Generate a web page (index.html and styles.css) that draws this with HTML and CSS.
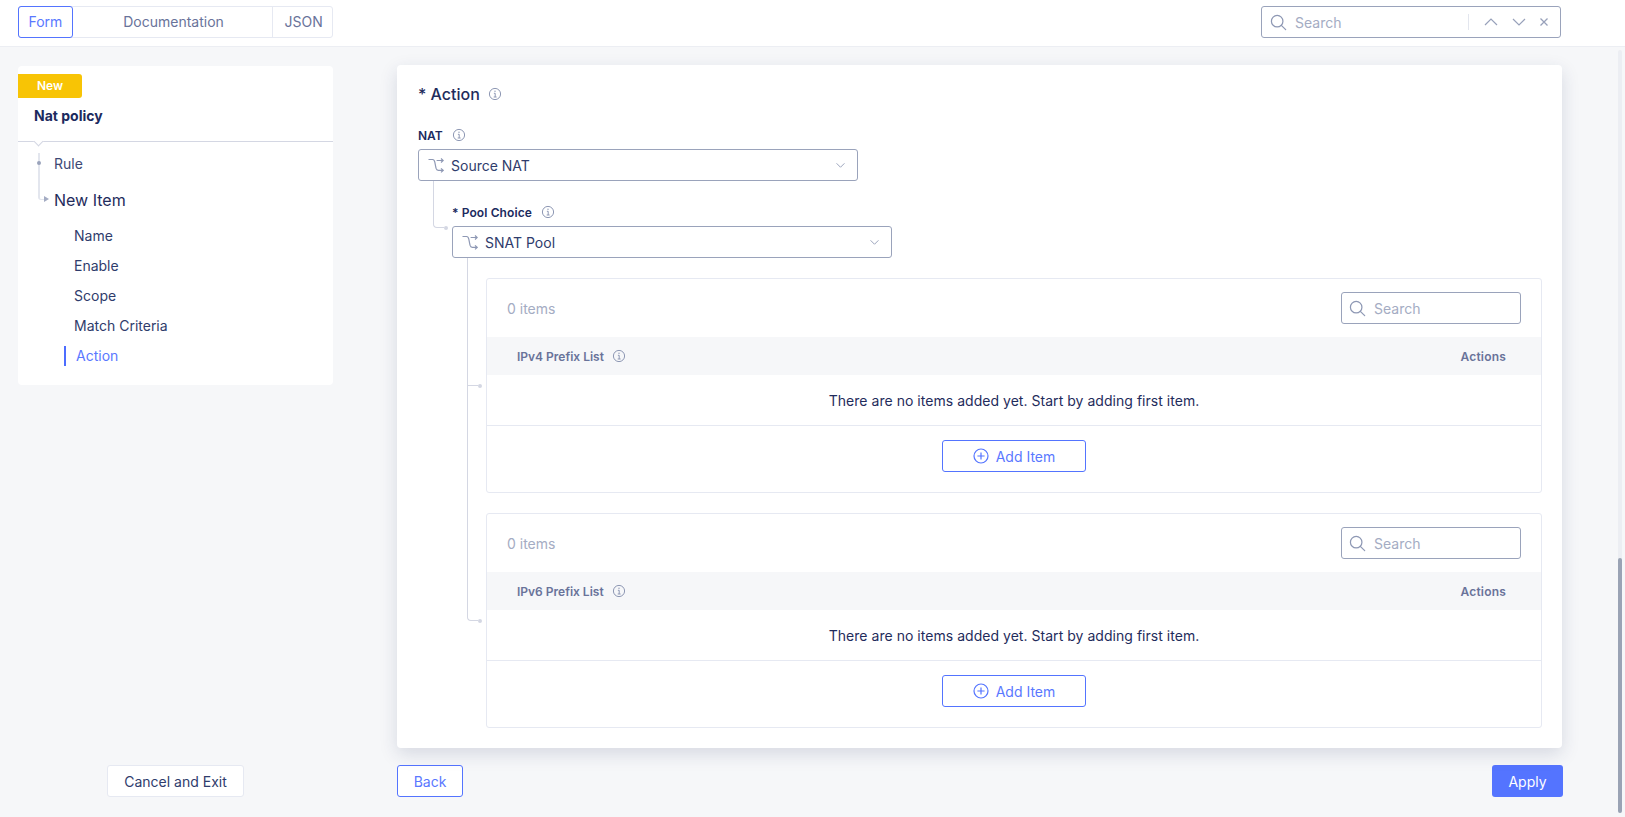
FILE: index.html
```html
<!DOCTYPE html>
<html lang="en">
<head>
<meta charset="utf-8">
<title>Nat policy</title>
<link rel="stylesheet" href="styles.css">
</head>
<body>
<svg class="defs" width="0" height="0" aria-hidden="true">
  <symbol id="i-info" viewBox="0 0 14 14"><circle cx="7" cy="7" r="5.6" fill="none" stroke="currentColor" stroke-width="1"/><path d="M5.9 6.3H7.2V10M5.7 10H8.6" fill="none" stroke="currentColor" stroke-width="1"/><circle cx="7" cy="4.3" r=".7" fill="currentColor"/></symbol>
  <symbol id="i-search" viewBox="0 0 18 18"><circle cx="7.6" cy="7.6" r="6.1" fill="none" stroke="currentColor" stroke-width="1.3"/><path d="M12 12l4.6 4.6" fill="none" stroke="currentColor" stroke-width="1.3" stroke-linecap="round"/></symbol>
  <symbol id="i-split" viewBox="0 0 16 15"><path d="M.5 1.5H4.6C6 1.5 6.4 2.4 6.8 4.2L8 10.2C8.4 11.6 9 12.4 10.2 12.4H15M8.6 2.5H15M13 .5l2.2 2-2.2 2M13 10.4l2.2 2-2.2 2" fill="none" stroke="currentColor" stroke-width="1.2"/></symbol>
  <symbol id="i-down" viewBox="0 0 12 8"><path d="M1.5 1.5L6 6l4.5-4.5" fill="none" stroke="currentColor" stroke-width="1.1"/></symbol>
  <symbol id="i-plus" viewBox="0 0 16 16"><circle cx="8" cy="8" r="7" fill="none" stroke="currentColor" stroke-width="1.2"/><path d="M8 4.4v7.2M4.4 8h7.2" fill="none" stroke="currentColor" stroke-width="1.2"/></symbol>
</svg>
<div class="page">
  <header class="topbar">
    <nav class="tabs">
      <a class="tab tab-form">Form</a>
      <a class="tab tab-doc">Documentation</a>
      <a class="tab tab-json">JSON</a>
    </nav>
    <div class="find">
      <svg class="find-icon"><use href="#i-search"/></svg>
      <span class="find-text">Search</span>
      <span class="find-sep"></span>
      <svg class="find-nav" viewBox="0 0 14 8"><path d="M1 7l6-6 6 6" fill="none" stroke="currentColor" stroke-width="1.2"/></svg>
      <svg class="find-nav" viewBox="0 0 14 8"><path d="M1 1l6 6 6-6" fill="none" stroke="currentColor" stroke-width="1.2"/></svg>
      <svg class="find-close" viewBox="0 0 10 10"><path d="M1.5 1.5l7 7M8.5 1.5l-7 7" fill="none" stroke="currentColor" stroke-width="1.3"/></svg>
    </div>
  </header>

  <div class="content">
    <aside class="side">
      <div class="side-card">
        <span class="badge">New</span>
        <h2 class="side-title">Nat policy</h2>
        <div class="side-rule"><span class="notch"></span></div>
        <div class="tree">
          <span class="tree-line"></span>
          <span class="tree-dot"></span>
          <span class="tree-arrow"></span>
          <div class="crumb">Rule</div>
          <div class="crumb crumb-current">New Item</div>
        </div>
        <ul class="steps">
          <li class="step">Name</li>
          <li class="step">Enable</li>
          <li class="step">Scope</li>
          <li class="step">Match Criteria</li>
          <li class="step step-active">Action</li>
        </ul>
      </div>
      <button class="btn btn-cancel">Cancel and Exit</button>
    </aside>

    <main class="main">
      <section class="panel">
        <h1 class="panel-title">* Action <svg class="info info-lg"><use href="#i-info"/></svg></h1>
        <label class="label">NAT <svg class="info"><use href="#i-info"/></svg></label>
        <div class="select">
          <svg class="split"><use href="#i-split"/></svg>
          <span class="select-text">Source NAT</span>
          <svg class="caret"><use href="#i-down"/></svg>
        </div>

        <div class="nested nested-pool">
          <span class="elbow elbow-pool"></span>
          <span class="node node-pool"></span>
          <label class="label label-pool">* Pool Choice <svg class="info"><use href="#i-info"/></svg></label>
          <div class="select">
            <svg class="split"><use href="#i-split"/></svg>
            <span class="select-text">SNAT Pool</span>
            <svg class="caret"><use href="#i-down"/></svg>
          </div>

          <div class="nested nested-tables">
            <span class="elbow elbow-t2"></span>
            <span class="tick"></span>
            <span class="node node-t1"></span>
            <span class="node node-t2"></span>

            <div class="table-card">
              <div class="table-top">
                <span class="count">0 items</span>
                <div class="mini-search"><svg class="mini-icon"><use href="#i-search"/></svg><span>Search</span></div>
              </div>
              <div class="table-head">
                <span class="th-name">IPv4 Prefix List <svg class="info th-info"><use href="#i-info"/></svg></span>
                <span class="th-actions">Actions</span>
              </div>
              <div class="table-empty">There are no items added yet. Start by adding first item.</div>
              <div class="table-foot"><button class="btn btn-add"><svg class="plus"><use href="#i-plus"/></svg>Add Item</button></div>
            </div>

            <div class="table-card">
              <div class="table-top">
                <span class="count">0 items</span>
                <div class="mini-search"><svg class="mini-icon"><use href="#i-search"/></svg><span>Search</span></div>
              </div>
              <div class="table-head">
                <span class="th-name">IPv6 Prefix List <svg class="info th-info"><use href="#i-info"/></svg></span>
                <span class="th-actions">Actions</span>
              </div>
              <div class="table-empty">There are no items added yet. Start by adding first item.</div>
              <div class="table-foot"><button class="btn btn-add"><svg class="plus"><use href="#i-plus"/></svg>Add Item</button></div>
            </div>
          </div>
        </div>
      </section>
      <div class="actions">
        <button class="btn btn-back">Back</button>
        <button class="btn btn-apply">Apply</button>
      </div>
    </main>
  </div>
  <div class="scrollbar"><span class="scroll-thumb"></span></div>
</div>
</body>
</html>
```
FILE: styles.css
```css
* { box-sizing: border-box; }
html, body { margin: 0; padding: 0; }
body { font-family: Inter, "Liberation Sans", sans-serif; font-size: 14px; color: #1f2c5c; background: #f6f7f9; }
.defs { position: absolute; }
svg { display: block; }

.page { position: relative; width: 1625px; height: 817px; overflow: hidden; display: flex; flex-direction: column; background: #f6f7f9; }

.topbar { height: 47px; flex: none; background: #fff; border-bottom: 1px solid #eceef3; padding: 6px 64px 0 18px; display: flex; justify-content: space-between; align-items: flex-start; }
.tabs { display: flex; height: 32px; width: 315px; border: 1px solid #e6e9f2; border-radius: 3px; }
.tab { display: flex; align-items: center; justify-content: center; color: #69739a; font-size: 14px; margin: -1px 0; padding-bottom: 1px; }
.tab-form { width: 55px; color: #5a78ff; border: 1px solid #5474ff; border-radius: 3px; margin-left: -1px; }
.tab-doc { width: 200px; padding-left: 2px; }
.tab-json { width: 60px; border-left: 1px solid #e6e9f2; padding-left: 2px; }

.find { width: 300px; height: 32px; background: #fff; border: 1px solid #9aa3bb; border-radius: 3px; display: flex; align-items: center; padding-left: 8px; color: #9da6bf; }
.find-icon { width: 17px; height: 17px; color: #8e98b4; margin-right: 8px; }
.find-text { font-size: 14px; width: 173px; color: #a4acc3; }
.find-sep { width: 1px; height: 16px; background: #e3e6ee; margin-right: 15px; }
.find-nav { width: 14px; height: 8px; margin-right: 14px; color: #98a1ba; }
.find-close { width: 10px; height: 10px; margin-left: -1px; color: #98a1ba; }

.content { flex: 1; display: flex; padding-left: 18px; min-height: 0; }
.side { width: 315px; flex: none; padding: 19px 0 20px; display: flex; flex-direction: column; justify-content: space-between; align-items: center; }
.side-card { width: 100%; height: 319px; background: #fff; border-radius: 4px; padding-top: 8px; position: relative; }
.badge { display: block; width: 64px; height: 24px; line-height: 24px; text-align: center; background: #f8c405; color: #fff; font-size: 12px; font-weight: 600; border-radius: 0 3px 3px 0; }
.side-title { margin: 0; padding-left: 16px; height: 43px; line-height: 36px; font-size: 14px; font-weight: 700; color: #1b2a5e; }
.side-rule { position: relative; height: 1px; background: #d4d7e3; }
.notch { position: absolute; left: 17px; top: 0; width: 7px; height: 7px; background: #fff; border-right: 1px solid #d4d7e3; border-bottom: 1px solid #d4d7e3; transform: translateY(-3px) rotate(45deg); }

.tree { position: relative; padding-left: 36px; padding-top: 11px; }
.tree-line { position: absolute; left: 20px; top: 11px; width: 7px; height: 47px; border-left: 2px solid #e3e6ee; border-bottom: 1px solid #e3e6ee; border-bottom-left-radius: 3px; }
.tree-dot { position: absolute; left: 19px; top: 19px; width: 4px; height: 4px; border-radius: 50%; background: #9aa3bb; }
.tree-arrow { position: absolute; left: 26px; top: 54px; border-left: 5px solid #a4acc3; border-top: 3px solid transparent; border-bottom: 3px solid transparent; }
.crumb { height: 22px; line-height: 22px; font-size: 14px; color: #3c4874; }
.crumb-current { margin-top: 13px; height: 24px; line-height: 24px; font-size: 16px; color: #1f2c5c; }

.steps { list-style: none; margin: 9px 0 0; padding: 0 0 0 56px; }
.step { height: 30px; line-height: 30px; font-size: 14px; color: #2f3c6c; }
.step-active { position: relative; color: #5a78ff; padding-left: 2px; }
.step-active::before { content: ""; position: absolute; left: -10px; top: 5px; width: 2px; height: 20px; background: #4d6dff; }

.btn { font-family: inherit; font-size: 14px; border-radius: 3px; background: #fff; cursor: pointer; padding: 0; }
.btn-cancel { width: 137px; height: 32px; flex: none; color: #2f3c6c; border: 1px solid #e6e9f2; }

.main { width: 1165px; margin-left: 64px; flex: none; display: flex; flex-direction: column; padding-top: 18px; }
.panel { height: 683px; background: #fff; border-radius: 4px; box-shadow: 0 6px 18px rgba(32, 48, 92, .15); padding: 18px 21px 0; position: relative; }
.panel-title { display: flex; align-items: center; margin: 0; height: 22px; font-size: 16px; font-weight: 500; color: #1f2c5c; white-space: pre; }
.info { width: 14px; height: 14px; color: #8e98b4; margin-left: 6px; flex: none; display: inline-block; vertical-align: -2px; }
.info-lg { margin-left: 4px; }
.th-info { margin-left: 5px; }

.label { display: block; margin-top: 21px; height: 18px; line-height: 20px; font-size: 12px; font-weight: 600; color: #1b2a5e; }
.select { margin-top: 5px; width: 440px; height: 32px; border: 1px solid #9aa3bb; border-radius: 3px; display: flex; align-items: center; padding-left: 9px; background: #fff; }
.split { width: 16px; height: 15px; color: #8e98b4; margin-right: 7px; }
.select-text { flex: 1; font-size: 14px; color: #2f3c6c; }
.caret { width: 11px; height: 7px; color: #98a1ba; margin-right: 11px; }

.nested { position: relative; }
.nested-pool { margin-left: 34px; padding-top: 22px; }
.label-pool { margin-top: 0; letter-spacing: .1px; }
.nested-tables { margin-left: 34px; padding-top: 20px; width: 1056px; }

.elbow { position: absolute; border-left: 1px solid #d4d7e3; border-bottom: 1px solid #d4d7e3; border-bottom-left-radius: 4px; width: 11px; }
.node { position: absolute; width: 4px; height: 4px; border-radius: 50%; background: #d4d7e3; }
.elbow-pool { left: -19px; top: 0; height: 47px; }
.node-pool { left: -8px; top: 45px; }
.elbow-t2 { left: -19px; top: 0; height: 363px; }
.tick { position: absolute; left: -19px; top: 127px; width: 11px; height: 1px; background: #d4d7e3; }
.node-t1 { left: -8px; top: 126px; }
.node-t2 { left: -8px; top: 361px; }

.table-card { height: 215px; border: 1px solid #e6e9f2; border-radius: 3px; background: #fff; margin-bottom: 20px; display: flex; flex-direction: column; }
.table-top { height: 58px; flex: none; display: flex; align-items: center; justify-content: space-between; padding: 0 20px 0 20px; }
.count { font-size: 14px; color: #a4acc3; }
.mini-search { width: 180px; height: 32px; border: 1px solid #9aa3bb; border-radius: 3px; display: flex; align-items: center; padding-left: 7px; font-size: 14px; color: #a4acc3; gap: 8px; }
.mini-icon { width: 17px; height: 17px; color: #8e98b4; }
.table-head { height: 38px; flex: none; background: #f6f7f9; display: flex; align-items: center; justify-content: space-between; padding: 0 35px 0 30px; font-size: 12px; font-weight: 600; color: #69739a; }
.th-name { display: flex; align-items: center; white-space: pre; }
.th-actions { letter-spacing: .2px; }
.table-empty { height: 51px; flex: none; border-bottom: 1px solid #e6e9f2; display: flex; align-items: center; justify-content: center; font-size: 14px; letter-spacing: .035px; color: #1f2c5c; }
.table-foot { flex: 1; display: flex; justify-content: center; padding-top: 14px; }
.btn-add { width: 144px; height: 32px; border: 1px solid #5474ff; color: #5a78ff; display: flex; align-items: center; justify-content: center; gap: 7px; }
.plus { width: 16px; height: 16px; color: #5474ff; }

.actions { display: flex; justify-content: space-between; margin-top: 17px; }
.btn-back { width: 66px; height: 32px; border: 1px solid #5474ff; color: #5a78ff; }
.btn-apply { width: 71px; height: 32px; margin-right: -1px; border: 0; background: #5474ff; color: #fff; }

.scrollbar { position: absolute; right: 3px; top: 50px; width: 4px; height: 763px; background: #eceef3; border-radius: 2px; }
.scroll-thumb { position: absolute; left: 0; right: 0; bottom: 0; height: 255px; background: #9aa3b5; border-radius: 2px; }
```
